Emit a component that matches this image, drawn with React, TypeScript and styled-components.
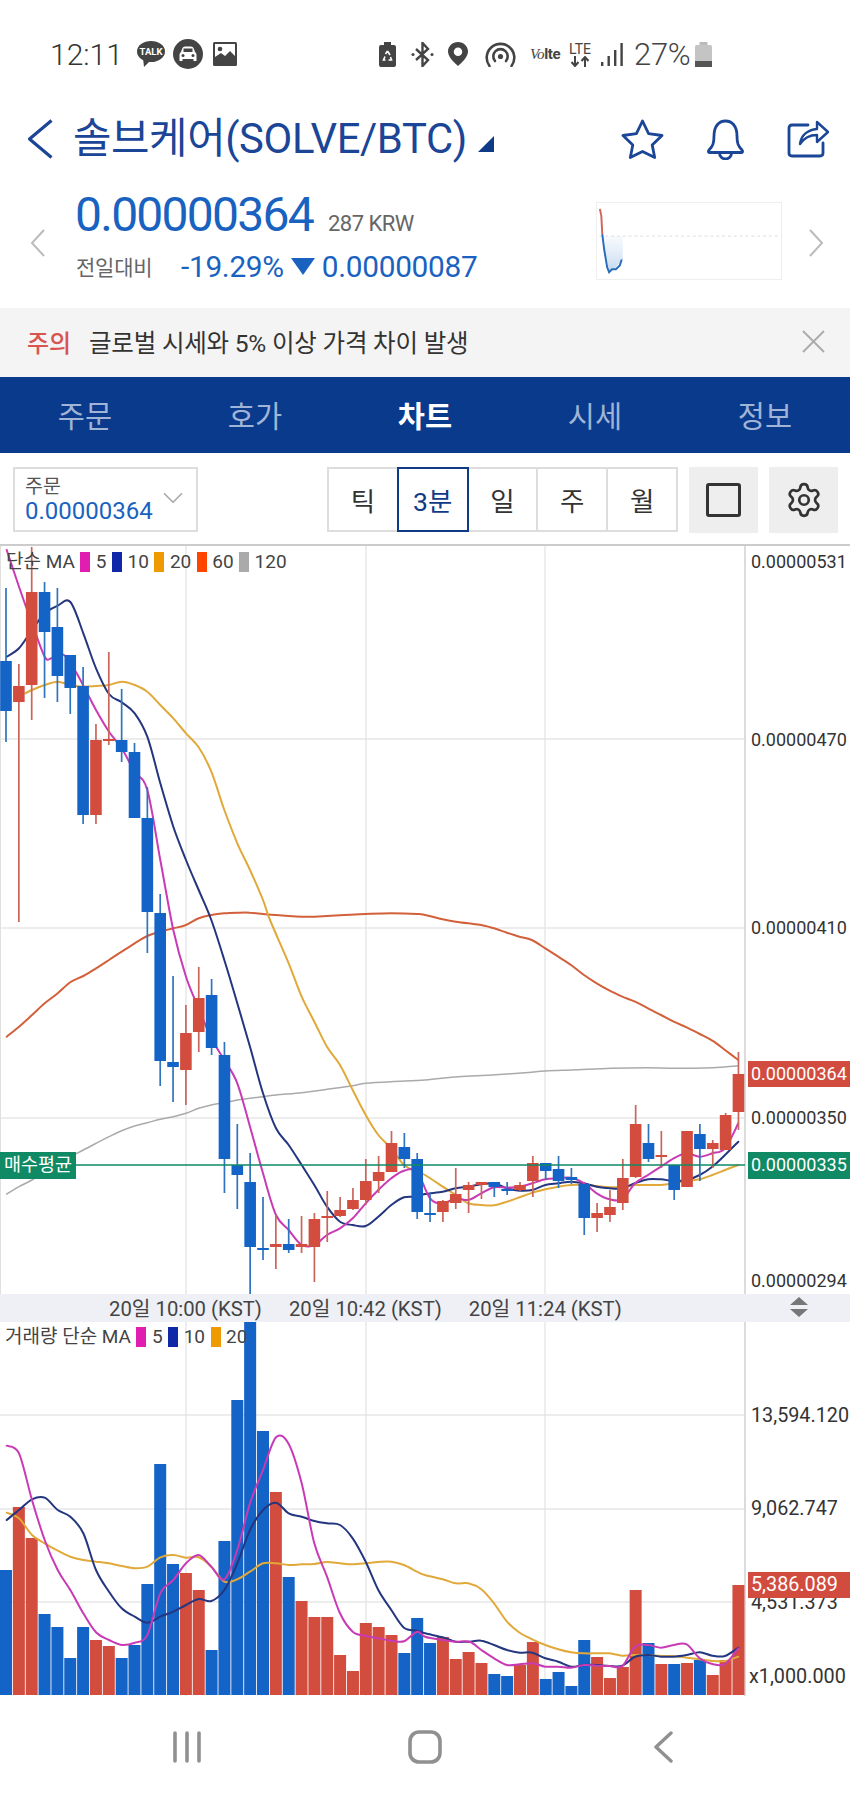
import React from "react";
import styled, { createGlobalStyle } from "styled-components";
import { ChevronDown, Settings } from "lucide-react";

const Global = createGlobalStyle`
  html, body { margin: 0; padding: 0; background: #fff; }
  body { font-family: Roboto, "Noto Sans CJK KR", sans-serif; color: #444; }
  * { box-sizing: border-box; }
`;

const NAVY = "#1b4596";
const PRICE = "#1a62bf";
const BLUE = "#1463c6";
const RED = "#d24d3e";

const Page = styled.div`
  width: 850px;
  height: 1795px;
  overflow: hidden;
  display: flex;
  flex-direction: column;
  background: #fff;
`;

/* status bar */
const StatusBar = styled.div`
  height: 108px;
  flex: none;
  display: flex;
  align-items: center;
  padding: 0 138px 0 50px;
  color: #444;
`;
const StatusTime = styled.span`
  font-size: 30px;
  font-weight: 300;
  width: 87px;
  color: #333;
`;
const StatusIcon = styled.svg<{ $gap?: number }>`
  flex: none;
  display: block;
  margin-left: ${(p) => p.$gap ?? 0}px;
`;
const Spacer = styled.div`
  flex: 1;
`;
const Volte = styled.span`
  margin-left: 14px;
  width: 32px;
  font-size: 15px;
  font-weight: 700;
  white-space: nowrap;
  letter-spacing: -0.4px;
`;
const VolteVo = styled.i`
  font-family: "Liberation Serif", serif;
  font-weight: 400;
  font-size: 15px;
`;
const LteBlock = styled.div`
  margin-left: 6px;
  width: 24px;
  display: flex;
  flex-direction: column;
  align-items: center;
`;
const LteText = styled.span`
  font-size: 14px;
  line-height: 14px;
  font-weight: 400;
`;
const Battery = styled.span`
  margin-left: 11px;
  font-size: 31px;
  font-weight: 300;
  width: 55px;
  white-space: nowrap;
  letter-spacing: -0.3px;
`;

/* header */
const Header = styled.div`
  height: 64px;
  flex: none;
  display: flex;
  align-items: center;
  padding: 0 21px 2px 27px;
`;
const Title = styled.div`
  margin-left: 20px;
  font-size: 41.8px;
  letter-spacing: -0.4px;
  color: ${NAVY};
  white-space: nowrap;
  line-height: 48px;
`;
const TitleCaret = styled.svg`
  margin: 10px 0 0 11px;
`;
const HeaderIcon = styled.svg<{ $gap: number }>`
  flex: none;
  margin-left: ${(p) => p.$gap}px;
`;

/* price */
const PriceBlock = styled.div`
  height: 136px;
  flex: none;
  display: flex;
  align-items: flex-start;
  padding-left: 30px;
`;
const SideArrow = styled.svg<{ $gap?: number }>`
  flex: none;
  margin-top: 57px;
  margin-left: ${(p) => p.$gap ?? 0}px;
`;
const PriceCol = styled.div`
  margin-left: 30px;
  width: 521px;
  display: flex;
  flex-direction: column;
  padding-top: 15px;
`;
const PriceRow = styled.div`
  display: flex;
  align-items: baseline;
`;
const BigPrice = styled.span`
  font-size: 48px;
  line-height: 56px;
  letter-spacing: -1.75px;
  color: ${PRICE};
`;
const Krw = styled.span`
  margin-left: 15px;
  font-size: 22px;
  letter-spacing: -0.5px;
  color: #666;
`;
const ChangeRow = styled.div`
  margin-top: 8px;
  display: flex;
  align-items: center;
  height: 30px;
`;
const ChangeLabel = styled.span`
  font-size: 21px;
  color: #666;
  width: 106px;
  padding-left: 1px;
  letter-spacing: -0.2px;
`;
const ChangeValue = styled.span`
  font-size: 29.8px;
  letter-spacing: -0.3px;
  color: ${PRICE};
  white-space: nowrap;
`;
const ChangeTri = styled.svg`
  margin: 0 7px 0 7px;
  flex: none;
`;
const MiniChart = styled.svg`
  flex: none;
  margin-top: 30px;
  border: 1px solid #eee;
  background: #fff;
`;

/* notice */
const Notice = styled.div`
  height: 69px;
  flex: none;
  display: flex;
  align-items: center;
  background: #f4f4f4;
  padding: 0 25px 3px 27px;
`;
const NoticeTag = styled.span`
  font-size: 24px;
  font-weight: 500;
  color: #d9534f;
  width: 62px;
`;
const NoticeText = styled.span`
  font-size: 24.5px;
  color: #333;
  flex: 1;
  letter-spacing: -0.2px;
`;

/* tabs */
const Tabs = styled.div`
  height: 76px;
  flex: none;
  display: flex;
  background: #0a3a8c;
`;
const Tab = styled.div<{ $active?: boolean }>`
  flex: 1;
  display: flex;
  align-items: center;
  justify-content: center;
  font-size: 29.5px;
  padding-bottom: 2px;
  color: ${(p) => (p.$active ? "#fff" : "#9fb4d6")};
  font-weight: ${(p) => (p.$active ? 700 : 400)};
`;

/* toolbar */
const Toolbar = styled.div`
  height: 91px;
  flex: none;
  display: flex;
  align-items: flex-start;
  padding: 14px 12px 0 13px;
`;
const OrderBox = styled.div`
  width: 185px;
  height: 65px;
  border: 2px solid #ddd;
  padding: 8px 0 0 10px;
  position: relative;
  line-height: 1;
`;
const OrderLabel = styled.div`
  font-size: 19.5px;
  color: #555;
  line-height: 20px;
`;
const OrderValue = styled.div`
  font-size: 24px;
  color: ${PRICE};
  line-height: 28px;
  letter-spacing: 0;
`;
const OrderChevron = styled(ChevronDown)`
  position: absolute;
  right: 6px;
  top: 12px;
  color: #aaa;
`;
const Segments = styled.div`
  margin-left: auto;
  width: 351px;
  height: 65px;
  display: flex;
`;
const Segment = styled.div<{ $on?: boolean }>`
  flex: 1;
  position: relative;
  z-index: ${(p) => (p.$on ? 1 : 0)};
  margin-left: -2px;
  &:first-child { margin-left: 0; }
  border: 2px solid ${(p) => (p.$on ? "#0f3a85" : "#ddd")};
  display: flex;
  align-items: center;
  justify-content: center;
  font-size: 26.5px;
  color: ${(p) => (p.$on ? "#0f3a85" : "#333")};
`;
const ToolBtn = styled.div`
  width: 69px;
  height: 66px;
  margin-left: 11px;
  flex: none;
  background: #eee;
  display: flex;
  align-items: center;
  justify-content: center;
  color: #333;
`;
const SquareGlyph = styled.div`
  width: 35px;
  height: 34px;
  border: 3px solid #333;
  border-radius: 3px;
`;

/* chart */
const ChartPanel = styled.div<{ $h: number; $ruled?: boolean }>`
  position: relative;
  height: ${(p) => p.$h}px;
  flex: none;
  overflow: hidden;
  background: #fff;
  border-top: ${(p) => (p.$ruled ? "2px solid #ccc" : "none")};
`;
const ChartSvg = styled.svg`
  display: block;
`;
const Legend = styled.div<{ $top: number; $left: number }>`
  position: absolute;
  top: ${(p) => p.$top}px;
  left: ${(p) => p.$left}px;
  display: flex;
  align-items: center;
  gap: 5.5px;
  font-size: 19px;
  line-height: 22px;
  color: #444;
  white-space: nowrap;
`;
const Swatch = styled.span<{ $c: string }>`
  width: 10px;
  height: 20px;
  background: ${(p) => p.$c};
  flex: none;
`;
const AxisLabel = styled.div<{ $y: number; $x?: number; $size?: number }>`
  position: absolute;
  left: ${(p) => p.$x ?? 751}px;
  top: ${(p) => p.$y}px;
  transform: translateY(-50%);
  font-size: ${(p) => p.$size ?? 18}px;
  line-height: 22px;
  color: #333;
  white-space: nowrap;
`;
const AxisBadge = styled.div<{ $y: number; $c: string; $h?: number; $size?: number }>`
  position: absolute;
  left: 748px;
  right: 0;
  top: ${(p) => p.$y}px;
  height: ${(p) => p.$h ?? 26}px;
  background: ${(p) => p.$c};
  color: #fff;
  font-size: ${(p) => p.$size ?? 18}px;
  line-height: 26px;
  padding-left: 3px;
  white-space: nowrap;
`;
const AvgBadge = styled.div<{ $y: number }>`
  position: absolute;
  left: 0;
  top: ${(p) => p.$y}px;
  width: 76px;
  height: 27px;
  background: #0f8a65;
  color: #fff;
  font-size: 18.5px;
  line-height: 27px;
  text-align: center;
  white-space: nowrap;
`;
const TimeAxis = styled.div`
  height: 28px;
  flex: none;
  background: #eef0f5;
  display: flex;
  align-items: center;
  padding: 0 40px 2px 109px;
  gap: 27px;
  font-size: 20.3px;
  color: #444;
`;
const TimeLabel = styled.span`
  white-space: nowrap;
`;
const SortIcon = styled.svg`
  margin-left: auto;
  flex: none;
`;

/* nav */
const NavBar = styled.div`
  flex: 1;
  display: flex;
  align-items: center;
  padding: 3px 68px 0;
`;
const NavSlot = styled.div`
  flex: 1;
  display: flex;
  justify-content: center;
`;

/* data: candles in page coordinates: colour, wick top, body top, body bottom, wick bottom */
type C = [string, number, number, number, number];
const candles: C[] = [
  ["b",588,661,711,742],["r",664,686,702,922],["r",547,592,685,720],["b",582,592,632,698],
  ["b",588,627,676,702],["b",655,655,688,714],["b",667,686,815,824],["r",724,740,815,824],
  ["r",652,739,741,745],["b",689,740,752,762],["b",743,752,818,818],["b",787,818,912,953],
  ["b",894,913,1061,1086],["b",976,1062,1067,1102],["r",1005,1033,1070,1105],["r",967,998,1032,1052],
  ["b",979,995,1048,1055],["b",1042,1055,1159,1193],["b",1124,1165,1175,1209],["b",1153,1182,1247,1295],
  ["b",1197,1248,1250,1260],["r",1215,1244,1247,1269],["b",1219,1244,1250,1253],["r",1216,1244,1247,1253],
  ["r",1213,1219,1247,1282],["r",1191,1216,1218,1242],["r",1197,1210,1216,1217],["r",1188,1200,1209,1210],
  ["r",1159,1181,1200,1205],["r",1156,1172,1181,1193],["r",1131,1143,1172,1172],["b",1133,1147,1159,1168],
  ["b",1153,1159,1212,1219],["b",1193,1213,1215,1222],["r",1200,1201,1212,1222],["r",1168,1194,1203,1209],
  ["r",1182,1185,1190,1213],["r",1182,1182,1185,1199],["b",1182,1182,1187,1197],["b",1182,1189,1191,1195],
  ["r",1182,1185,1190,1191],["r",1156,1163,1181,1197],["b",1163,1163,1171,1180],["b",1156,1169,1181,1188],
  ["b",1168,1177,1180,1184],["b",1184,1184,1218,1235],["r",1203,1213,1218,1232],["r",1190,1207,1215,1222],
  ["r",1159,1178,1203,1210],["r",1105,1124,1177,1178],["b",1124,1143,1159,1162],["r",1131,1155,1157,1168],
  ["b",1165,1165,1190,1200],["r",1131,1131,1187,1187],["b",1124,1134,1149,1181],["r",1140,1143,1149,1168],
  ["r",1113,1115,1150,1150],["r",1052,1074,1112,1130],
];
const volTops = [
  1570,1507,1538,1614,1627,1658,1627,1640,1646,1658,1645,1584,1464,1564,1573,1590,1650,1541,1400,1322,1431,1492,
  1577,1601,1617,1617,1655,1671,1623,1627,1635,1653,1618,1643,1637,1659,1652,1663,1674,1676,1665,1642,1679,1672,
  1686,1640,1657,1678,1667,1590,1643,1664,1664,1663,1660,1675,1660,1585,
];
const cx = (i: number) => 6 + 12.85 * i;

const zp = (ox: number, oy: number, pts: number[]) => {
  const out: [number, number][] = [];
  for (let i = 0; i < pts.length; i += 2) out.push([ox + pts[i] / 3, oy + pts[i + 1] / 3]);
  return out;
};
const smooth = (p: [number, number][]) => {
  let d = `M${p[0][0].toFixed(1)} ${p[0][1].toFixed(1)}`;
  for (let i = 0; i < p.length - 1; i++) {
    const a = p[i - 1] ?? p[i], b = p[i], c = p[i + 1], e = p[i + 2] ?? c;
    const f = (n: number) => n.toFixed(1);
    d += `C${f(b[0] + (c[0] - a[0]) / 6)} ${f(b[1] + (c[1] - a[1]) / 6)} ${f(c[0] - (e[0] - b[0]) / 6)} ${f(c[1] - (e[1] - b[1]) / 6)} ${f(c[0])} ${f(c[1])}`;
  }
  return d;
};

const ma5 = [
  ...zp(0,540,[20,30,57,140,96,250,134,350,155,355,192,345,230,400,288,510,327,575,365,625,404,695,442,750,481,960,520,1170]),
  ...zp(0,920,[558,170,596,265,634,355,673,420,712,490,750,620,789,760,828,885,866,930,905,975,943,975,981,945,1020,925,1058,895,1097,850,1135,810,1174,775,1212,752,1251,755]),
  ...zp(425,920,[15,835,53,850,92,835,130,840,169,820,207,802,246,803,284,800,322,790,361,778,400,775,438,773,477,790,515,820,554,838,592,838,630,790,669,765,708,740,746,715,785,700,824,710,862,700,900,685,940,610]),
];
const ma10 = [
  ...zp(0,540,[20,350,57,325,96,270,134,220,173,197,211,186,250,280,288,385,327,462,365,487,404,520,442,590,481,730,520,860,558,960,596,1050]),
  ...zp(0,920,[634,0,673,120,712,250,750,380,789,520,828,625,866,675,905,735,943,795,981,860,1020,905,1058,915,1097,918,1135,890,1174,855,1212,832,1251,830]),
  ...zp(425,920,[0,822,53,815,92,805,130,800,169,793,207,790,246,805,284,812,322,810,361,795,400,790,438,785,477,790,515,800,554,805,592,805,630,790,669,778,708,778,746,783,785,780,824,765,862,740,900,705,940,665]),
];
const ma20 = [
  ...zp(0,540,[76,460,96,450,134,435,173,425,211,435,250,440,288,438,327,435,365,425,404,435,442,455,481,495,520,535,558,580,596,622,634,695,673,810,712,910,750,990,789,1080]),
  ...zp(0,920,[810,0,866,130,905,230,943,305,981,380,1020,435,1058,510,1097,585,1135,645,1174,685,1212,735,1251,755]),
  ...zp(425,920,[0,765,53,800,92,825,130,850,169,855,207,856,246,845,284,832,322,818,361,808,400,800,438,795,477,795,515,798,554,802,592,800,630,795,669,795,708,795,746,790,785,783,824,778,862,765,900,750,940,735]),
];
const ma60 = [
  ...zp(0,920,[20,350,57,320,96,285,134,250,173,220,211,187,250,168,288,145,327,120,365,95,404,70,442,48,481,35,520,25,558,15]),
  ...zp(0,540,[596,1135,634,1125,673,1120,712,1118,750,1118,789,1122,828,1125,866,1128,905,1130,943,1130,1020,1126,1097,1122,1174,1120,1251,1122]),
  ...zp(425,540,[0,1125,53,1138,92,1145,130,1150,169,1155,207,1165,246,1178,284,1190]),
  ...zp(425,920,[320,60,361,85,400,110,438,135,477,165,515,190,554,212,592,230,630,245,669,265,708,285,746,305,785,322,824,342,862,362,900,390,940,420]),
];
const ma120 = [
  ...zp(0,920,[20,822,57,800,96,780,134,755,173,730,211,710,250,690,288,670,327,650,365,632,404,618,442,608,481,598,520,590,558,580,596,565,634,555,673,548,712,540,750,535,789,530,828,525,905,518,981,508,1058,497,1097,490,1174,485]),
  ...zp(425,920,[0,480,100,470,200,465,300,458,361,453,440,450,558,445,669,443,746,445,862,443,940,437]),
];
const v5 = [
  ...zp(0,1300,[20,437,57,460,96,600,134,720,173,810,211,870,250,940,288,997,327,1020,365,1035,404,1028,442,1005,481,880,520,840,558,790,596,765,634,800,673,838,712,750,750,610,789,510,828,412,866,432,905,550,943,730,981,830,1020,940,1058,995,1097,1008,1135,1015,1174,1022,1212,1024,1251,995]),
  ...zp(425,1300,[0,1010,53,1020,92,1025,134,1025,169,1050,207,1075,246,1095,284,1093,322,1090,361,1100,400,1100,438,1103,477,1095,515,1097,554,1098,592,1098,630,1040,669,1035,708,1043,746,1035,785,1033,824,1075,862,1092,900,1092,940,1045]),
];
const v10 = [
  ...zp(0,1300,[20,660,57,630,96,598,134,593,173,630,211,650,250,700,288,810,327,875,365,925,404,950,442,968,481,950,520,935,558,915,596,897,634,903,673,870,712,790,750,690,789,630,828,608,866,640,905,650,943,663,981,670,1020,675,1058,715,1097,785,1135,870,1174,930,1212,983,1251,992]),
  ...zp(425,1300,[0,1000,53,1012,92,1025,130,1025,169,1022,207,1035,246,1050,284,1058,322,1058,361,1075,400,1085,438,1100,477,1095,515,1095,554,1098,592,1097,630,1070,669,1065,708,1070,746,1070,785,1065,824,1057,862,1067,900,1068,940,1043]),
];
const v20 = [
  ...zp(0,1300,[20,638,57,655,96,705,134,730,173,752,211,770,250,780,288,785,327,790,365,798,404,805,442,800,481,772,520,765,558,773,596,772,634,800,673,845,712,838,750,815,789,790,828,790,866,795,905,793,943,792,981,786,1020,790,1058,793,1097,790,1135,786,1174,785,1212,795,1251,815]),
  ...zp(425,1300,[0,825,53,838,92,850,130,850,169,868,207,910,246,965,284,998,322,1018,361,1035,400,1048,438,1057,477,1060,515,1060,554,1060,592,1067,630,1065,669,1065,708,1068,746,1068,785,1073,824,1078,862,1083,900,1083,940,1070]),
];

const PriceChart = () => (
  <ChartSvg width={850} height={748} viewBox="0 546 850 748">
    {[739, 928, 1118].map((y) => (
      <line key={y} x1={0} x2={745} y1={y} y2={y} stroke="#dcdcdc" strokeWidth={1.2} />
    ))}
    {[186, 366, 545].map((x) => (
      <line key={x} x1={x} x2={x} y1={546} y2={1294} stroke="#e2e2e2" strokeWidth={1.2} />
    ))}
    <line x1={0.5} x2={0.5} y1={546} y2={1294} stroke="#e0e0e0" />
    <line x1={745} x2={745} y1={546} y2={1294} stroke="#dcdcdc" strokeWidth={2} />
    <g fill="none" strokeLinejoin="round" strokeLinecap="round">
      <path d={smooth(ma120)} stroke="#aaaaaa" strokeWidth={1.5} />
      <path d={smooth(ma60)} stroke="#d2603a" strokeWidth={2} />
      <path d={smooth(ma20)} stroke="#e0a93a" strokeWidth={2} />
      <path d={smooth(ma10)} stroke="#24367f" strokeWidth={2} />
      <path d={smooth(ma5)} stroke="#c93ab5" strokeWidth={2} />
    </g>
    {candles.map(([c, wt, bt, bb, wb], i) => {
      const col = c === "b" ? BLUE : RED;
      const wick = c === "b" ? "#2f74bd" : "#c9655a";
      return (
        <g key={i}>
          <line x1={cx(i)} x2={cx(i)} y1={wt} y2={wb} stroke={wick} strokeWidth={1.7} />
          <rect x={cx(i) - 5.8} y={bt} width={11.6} height={Math.max(bb - bt, 2)} fill={col} />
        </g>
      );
    })}
    <line x1={0} x2={745} y1={1165} y2={1165} stroke="#0f8a65" strokeWidth={1.4} />
  </ChartSvg>
);

const VolumeChart = () => (
  <ChartSvg width={850} height={374} viewBox="0 1322 850 374">
    {[1415, 1509, 1602].map((y) => (
      <line key={y} x1={0} x2={745} y1={y} y2={y} stroke="#dcdcdc" strokeWidth={1.2} />
    ))}
    {[186, 366, 545].map((x) => (
      <line key={x} x1={x} x2={x} y1={1322} y2={1696} stroke="#e2e2e2" strokeWidth={1.2} />
    ))}
    <line x1={745} x2={745} y1={1322} y2={1696} stroke="#dcdcdc" strokeWidth={2} />
    {volTops.map((t, i) => (
      <rect key={i} x={cx(i) - 6} y={t} width={12} height={1695 - t} fill={candles[i][0] === "b" ? BLUE : RED} />
    ))}
    <g fill="none" strokeLinejoin="round" strokeLinecap="round">
      <path d={smooth(v20)} stroke="#e0a93a" strokeWidth={2} />
      <path d={smooth(v10)} stroke="#24367f" strokeWidth={2} />
      <path d={smooth(v5)} stroke="#c93ab5" strokeWidth={2} />
    </g>
  </ChartSvg>
);

const SWC = { m: "#e01fb0", n: "#0f28a8", o: "#ee9a00", r: "#ff4500", g: "#aaaaaa" };

export default function App() {
  return (
    <Page>
      <Global />
      <StatusBar>
        <StatusTime>12:11</StatusTime>
        <StatusIcon width={28} height={26} viewBox="0 0 28 26">
          <ellipse cx={14} cy={10.5} rx={14} ry={10.5} fill="#444" />
          <path d="M6 17 L7 26 L14 19 Z" fill="#444" />
          <text x={14} y={14} fontSize={9.5} fontWeight={700} fill="#fff" textAnchor="middle" fontFamily="Roboto, sans-serif">TALK</text>
        </StatusIcon>
        <StatusIcon $gap={8} width={30} height={30} viewBox="0 0 30 30">
          <circle cx={15} cy={15} r={15} fill="#444" />
          <path d="M9.5 9 Q10 7.5 12 7.5 H18 Q20 7.5 20.5 9 L22 13 Q23.5 14 23.5 16 V22 H20.5 V20 H9.5 V22 H6.5 V16 Q6.5 14 8 13 Z" fill="#fff" />
          <rect x={10.5} y={9.5} width={9} height={3.5} fill="#444" />
          <circle cx={10} cy={16.5} r={1.5} fill="#444" />
          <circle cx={20} cy={16.5} r={1.5} fill="#444" />
        </StatusIcon>
        <StatusIcon $gap={10} width={24} height={24} viewBox="0 0 24 24">
          <rect width={24} height={24} rx={1.5} fill="#444" />
          <rect x={2} y={2} width={20} height={18} fill="#fff" />
          <circle cx={7} cy={7} r={2.3} fill="#444" />
          <path d="M2 21 V15 L8 11 L12 14 L17 9 L22 14 V21 Z" fill="#444" />
        </StatusIcon>
        <Spacer />
        <StatusIcon width={17} height={25} viewBox="0 0 17 25">
          <path d="M5 0 H12 V3 H15 Q17 3 17 5 V23 Q17 25 15 25 H2 Q0 25 0 23 V5 Q0 3 2 3 H5 Z" fill="#444" />
          <path d="M8.5 9 L11 13 M11.5 15 L12.5 18 L9.5 18 M6.5 18 H4.5 L6 14.5 M6.5 12 L8.5 9" stroke="#fff" strokeWidth={1.6} fill="none" />
        </StatusIcon>
        <StatusIcon $gap={15} width={23} height={25} viewBox="0 0 23 25">
          <path d="M5 7 L17 18 L11.5 24 V1 L17 7 L5 18" fill="none" stroke="#444" strokeWidth={2.4} />
          <circle cx={2} cy={12.5} r={1.5} fill="#444" />
          <circle cx={21} cy={12.5} r={1.5} fill="#444" />
        </StatusIcon>
        <StatusIcon $gap={14} width={20} height={24} viewBox="0 0 20 24">
          <path fillRule="evenodd" d="M10 0 C4.5 0 0 4.2 0 9.5 C0 15 6 20.5 10 24 C14 20.5 20 15 20 9.5 C20 4.2 15.5 0 10 0 Z M10 5.5 A4.2 4.2 0 1 1 10 14 A4.2 4.2 0 1 1 10 5.5 Z" fill="#444" />
        </StatusIcon>
        <StatusIcon $gap={17} width={31} height={25} viewBox="0 0 31 25">
          <path d="M4.5 24 A13.8 13.8 0 1 1 26.5 24" fill="none" stroke="#444" strokeWidth={2.6} strokeLinecap="round" />
          <path d="M10 19 A7.2 7.2 0 1 1 21 19" fill="none" stroke="#444" strokeWidth={2.6} strokeLinecap="round" />
          <circle cx={15.5} cy={14.5} r={2.6} fill="#444" />
        </StatusIcon>
        <Volte><VolteVo>V</VolteVo><VolteVo>o</VolteVo>lte</Volte>
        <LteBlock>
          <LteText>LTE</LteText>
          <svg width={20} height={11} viewBox="0 0 20 11">
            <path d="M5 0 V9 M1.5 6 L5 10 L8.5 6 M15 11 V2 M11.5 5 L15 1 L18.5 5" fill="none" stroke="#444" strokeWidth={2} />
          </svg>
        </LteBlock>
        <StatusIcon $gap={9} width={22} height={23} viewBox="0 0 22 23">
          <rect x={0} y={19} width={2.4} height={4} fill="#444" />
          <rect x={6.5} y={13} width={2.4} height={10} fill="#444" />
          <rect x={13} y={7} width={2.4} height={16} fill="#444" />
          <rect x={19.4} y={0} width={2.4} height={23} fill="#444" />
        </StatusIcon>
        <Battery>27%</Battery>
        <StatusIcon $gap={6} width={17} height={25} viewBox="0 0 17 25">
          <rect x={4.5} y={0} width={8} height={3} fill="#bbb" />
          <rect x={0} y={3} width={17} height={22} rx={1.5} fill="#c4c4c4" />
          <rect x={0} y={19} width={17} height={6} fill="#555" />
        </StatusIcon>
      </StatusBar>

      <Header>
        <svg width={26} height={40} viewBox="0 0 26 40">
          <path d="M24.5 1.5 L2.5 20 L24.5 38.5" fill="none" stroke={NAVY} strokeWidth={3.2} strokeLinejoin="round" />
        </svg>
        <Title>솔브케어(SOLVE/BTC)</Title>
        <TitleCaret width={16} height={16} viewBox="0 0 16 16">
          <path d="M16 0 V16 H0 Z" fill="#0f3a85" />
        </TitleCaret>
        <Spacer />
        <HeaderIcon $gap={0} width={43} height={40} viewBox="0 0 43 40">
          <path d="M21.5 2 L27.6 14.6 L41 16.5 L31.2 26 L33.7 38.5 L21.5 32.4 L9.3 38.5 L11.8 26 L2 16.5 L15.4 14.6 Z" fill="none" stroke={NAVY} strokeWidth={2.8} strokeLinejoin="round" />
        </HeaderIcon>
        <HeaderIcon $gap={42} width={39} height={41} viewBox="0 0 39 41">
          <path d="M3 31 C7 27 8 24 8 17 C8 7 13 2 19.5 2 C26 2 31 7 31 17 C31 24 32 27 36 31 Q37.5 33.5 35 33.5 H4 Q1.5 33.5 3 31 Z M13.5 34 A6 6 0 0 0 25.5 34" fill="none" stroke={NAVY} strokeWidth={2.8} strokeLinejoin="round" />
        </HeaderIcon>
        <HeaderIcon $gap={42} width={42} height={38} viewBox="0 0 42 38">
          <path d="M21 5 H5 Q2 5 2 8 V33 Q2 36 5 36 H33 Q36 36 36 33 V23" fill="none" stroke={NAVY} strokeWidth={2.8} strokeLinecap="round" />
          <path d="M13 24 C14 15 21 10 30 9 V2 L41 12 L30 22 V15 C22 15 17 18 13 24 Z" fill="none" stroke={NAVY} strokeWidth={2.4} strokeLinejoin="round" />
        </HeaderIcon>
      </Header>

      <PriceBlock>
        <SideArrow width={15} height={28} viewBox="0 0 15 28">
          <path d="M14 1 L2 14 L14 27" fill="none" stroke="#bbb" strokeWidth={2} />
        </SideArrow>
        <PriceCol>
          <PriceRow>
            <BigPrice>0.00000364</BigPrice>
            <Krw>287 KRW</Krw>
          </PriceRow>
          <ChangeRow>
            <ChangeLabel>전일대비</ChangeLabel>
            <ChangeValue>-19.29%</ChangeValue>
            <ChangeTri width={24} height={17} viewBox="0 0 24 17">
              <path d="M0 0 H24 L12 17 Z" fill={PRICE} />
            </ChangeTri>
            <ChangeValue>0.00000087</ChangeValue>
          </ChangeRow>
        </PriceCol>
        <MiniChart width={186} height={78} viewBox="596 202 186 78">
          <defs>
            <linearGradient id="miniFill" x1="0" x2="0" y1="0" y2="1">
              <stop offset="0" stopColor="#d7e4f5" stopOpacity={0.2} />
              <stop offset="1" stopColor="#c3d8f0" />
            </linearGradient>
          </defs>
          <path d="M601 236 H621 V260 L612 270 L607 273 L603 260 Z" fill="url(#miniFill)" />
          <line x1={597} x2={782} y1={236} y2={236} stroke="#ddd" strokeDasharray="3 3" />
          <path d="M597.5 208 L599 215 L600 234" fill="none" stroke="#d0665a" strokeWidth={2} />
          <path d="M600 234 L602 250 L605 268 L607 273 L610 270 L614 270 L618 266 L620 260" fill="none" stroke="#2a6cb8" strokeWidth={2} />
        </MiniChart>
        <SideArrow $gap={27} width={15} height={28} viewBox="0 0 15 28">
          <path d="M1 1 L13 14 L1 27" fill="none" stroke="#bbb" strokeWidth={2} />
        </SideArrow>
      </PriceBlock>

      <Notice>
        <NoticeTag>주의</NoticeTag>
        <NoticeText>글로벌 시세와 5% 이상 가격 차이 발생</NoticeText>
        <svg width={23} height={23} viewBox="0 0 23 23">
          <path d="M1 1 L22 22 M22 1 L1 22" stroke="#aaa" strokeWidth={1.8} />
        </svg>
      </Notice>

      <Tabs>
        <Tab>주문</Tab>
        <Tab>호가</Tab>
        <Tab $active>차트</Tab>
        <Tab>시세</Tab>
        <Tab>정보</Tab>
      </Tabs>

      <Toolbar>
        <OrderBox>
          <OrderLabel>주문</OrderLabel>
          <OrderValue>0.00000364</OrderValue>
          <OrderChevron size={34} strokeWidth={1.2} />
        </OrderBox>
        <Segments>
          <Segment>틱</Segment>
          <Segment $on>3분</Segment>
          <Segment>일</Segment>
          <Segment>주</Segment>
          <Segment>월</Segment>
        </Segments>
        <ToolBtn><SquareGlyph /></ToolBtn>
        <ToolBtn><Settings size={38} strokeWidth={1.7} /></ToolBtn>
      </Toolbar>

      <ChartPanel $h={750} $ruled>
        <PriceChart />
        <Legend $top={5} $left={6}>
          <span>단순 MA</span>
          <Swatch $c={SWC.m} /><span>5</span>
          <Swatch $c={SWC.n} /><span>10</span>
          <Swatch $c={SWC.o} /><span>20</span>
          <Swatch $c={SWC.r} /><span>60</span>
          <Swatch $c={SWC.g} /><span>120</span>
        </Legend>
        <AxisLabel $y={16}>0.00000531</AxisLabel>
        <AxisLabel $y={194}>0.00000470</AxisLabel>
        <AxisLabel $y={382}>0.00000410</AxisLabel>
        <AxisLabel $y={572}>0.00000350</AxisLabel>
        <AxisLabel $y={735}>0.00000294</AxisLabel>
        <AxisBadge $y={515} $c="#d14c3f">0.00000364</AxisBadge>
        <AxisBadge $y={606} $c="#0f8a65" $h={27}>0.00000335</AxisBadge>
        <AvgBadge $y={606}>매수평균</AvgBadge>
      </ChartPanel>

      <TimeAxis>
        <TimeLabel>20일 10:00 (KST)</TimeLabel>
        <TimeLabel>20일 10:42 (KST)</TimeLabel>
        <TimeLabel>20일 11:24 (KST)</TimeLabel>
        <SortIcon width={22} height={20} viewBox="0 0 22 20">
          <path d="M11 0 L20 8 H2 Z M2 12 H20 L11 20 Z" fill="#777" />
          <rect x={0} y={9} width={22} height={2} fill="#eef0f5" />
        </SortIcon>
      </TimeAxis>

      <ChartPanel $h={374}>
        <VolumeChart />
        <Legend $top={4} $left={5}>
          <span>거래량 단순 MA</span>
          <Swatch $c={SWC.m} /><span>5</span>
          <Swatch $c={SWC.n} /><span>10</span>
          <Swatch $c={SWC.o} /><span>20</span>
        </Legend>
        <AxisLabel $y={94} $size={19.8}>13,594.120</AxisLabel>
        <AxisLabel $y={187} $size={19.8}>9,062.747</AxisLabel>
        <AxisLabel $y={281} $size={19.8}>4,531.373</AxisLabel>
        <AxisBadge $y={250} $c="#d14c3f" $size={19.8}>5,386.089</AxisBadge>
        <AxisLabel $y={355} $x={749} $size={19.8}>x1,000.000</AxisLabel>
      </ChartPanel>

      <NavBar>
        <NavSlot>
          <svg width={30} height={32} viewBox="0 0 30 32">
            <path d="M3 2 V30 M15 2 V30 M27 2 V30" stroke="#909090" strokeWidth={3.6} strokeLinecap="round" />
          </svg>
        </NavSlot>
        <NavSlot>
          <svg width={34} height={34} viewBox="0 0 34 34">
            <rect x={2} y={2} width={30} height={30} rx={9} fill="none" stroke="#909090" strokeWidth={3.6} />
          </svg>
        </NavSlot>
        <NavSlot>
          <svg width={20} height={32} viewBox="0 0 20 32">
            <path d="M18 2 L3 16 L18 30" fill="none" stroke="#909090" strokeWidth={3.4} strokeLinecap="round" strokeLinejoin="round" />
          </svg>
        </NavSlot>
      </NavBar>
    </Page>
  );
}
